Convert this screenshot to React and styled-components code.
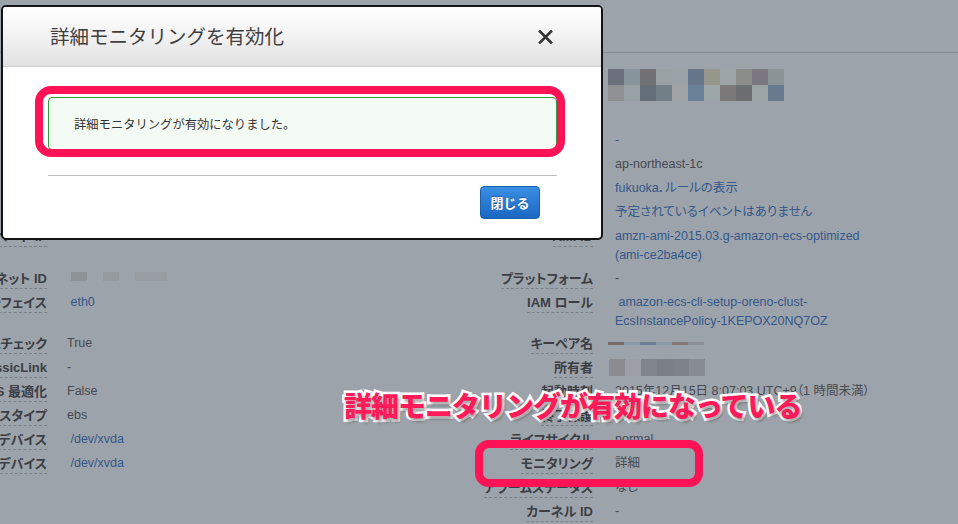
import React from "react";
import styled, { createGlobalStyle } from "styled-components";

const Global = createGlobalStyle`
  html, body { margin: 0; padding: 0; background: #9da3aa; }
  body { width: 958px; height: 524px; overflow: hidden; }
`;

const Page = styled.div`
  position: relative;
  width: 958px;
  height: 524px;
  overflow: hidden;
  background: #9da3aa;
  font-family: "Liberation Sans", "Noto Sans CJK JP", sans-serif;
`;

const TopBar = styled.div`
  height: 52px;
  border-bottom: 1px solid #878c93;
`;

const DetailGrid = styled.div`
  display: grid;
  grid-template-columns: 200px 316px 190px 1fr;
  column-gap: 20px;
  margin: 12px 0 0 -153px;
`;

const Label = styled.div`
  padding: 2px 0;
  text-align: right;
  font-size: 13px;
  font-weight: 700;
  color: #3b3e45;
  line-height: 20px;
  white-space: nowrap;
  font-feature-settings: "palt";
`;

const LabelText = styled.span`
  display: inline-block;
  line-height: 19px;
  border-bottom: 1px dashed #7c8188;
`;

const Value = styled.div`
  padding: 2px 0 2px ${(p) => (p.$right ? "2px" : "0")};
  font-size: 12.5px;
  line-height: 19px;
  color: #464a51;
  white-space: nowrap;
  font-feature-settings: "palt";
`;

const Link = styled.span`
  color: #34588b;
  line-height: ${(p) => p.$lh || "inherit"};
  display: ${(p) => (p.$lh ? "block" : "inline")};
`;

const PixelGrid = styled.div`
  display: grid;
  grid-template-columns: repeat(${(p) => p.$cols}, ${(p) => p.$w}px);
  grid-auto-rows: ${(p) => p.$h}px;
  margin: ${(p) => p.$m || "0"};
`;

const Pixel = styled.span`
  background: ${(p) => p.$c};
`;

const Dialog = styled.div`
  position: absolute;
  left: 1px;
  top: 5px;
  width: 598px;
  height: 231px;
  border: 2px solid #141414;
  border-radius: 5px;
  background: #fff;
  display: flex;
  flex-direction: column;
  overflow: hidden;
`;

const DialogHeader = styled.div`
  height: 59px;
  flex: none;
  display: flex;
  align-items: center;
  justify-content: space-between;
  padding: 0 48px 0 47px;
  background: linear-gradient(#ffffff 0%, #f3f3f3 45%, #e1e1e1 100%);
  border-bottom: 1px solid #cfcfcf;
`;

const Title = styled.h1`
  margin: 0;
  font-family: "Noto Sans CJK JP", sans-serif;
  font-size: 19.5px;
  font-weight: 400;
  color: #404040;
  line-height: 1;
  padding-bottom: 2px;
`;

const CloseButton = styled.button`
  border: 0;
  background: none;
  padding: 0;
  width: 15px;
  height: 14px;
  display: flex;
  cursor: pointer;
  margin-top: 1px;
`;

const DialogBody = styled.div`
  padding: 30px 44px 0 45px;
  display: flex;
  flex-direction: column;
`;

const Alert = styled.div`
  height: 51px;
  display: flex;
  align-items: center;
  padding-left: 25px;
  border: 1px solid #2f9c41;
  border-radius: 4px;
  background: #f4fbf5;
  font-family: "Noto Sans CJK JP", sans-serif;
  font-size: 12.3px;
  color: #333;
`;

const Footer = styled.div`
  margin-top: 25px;
  border-top: 1px solid #bdbdbd;
  padding: 10px 17px 0 0;
  display: flex;
  justify-content: flex-end;
`;

const PrimaryButton = styled.button`
  width: 60px;
  height: 33px;
  border: 1px solid #1b5fae;
  border-radius: 4px;
  background: linear-gradient(#3a8fe2, #1b67c2);
  color: #fff;
  font-family: "Noto Sans CJK JP", sans-serif;
  font-size: 13px;
  font-weight: 700;
  text-shadow: 0 -1px 0 rgba(0, 0, 0, 0.3);
  padding: 0;
`;

const Highlight = styled.div`
  position: absolute;
  left: ${(p) => p.$x}px;
  top: ${(p) => p.$y}px;
  width: ${(p) => p.$w}px;
  height: ${(p) => p.$h}px;
  box-sizing: border-box;
  border: 8px solid #ff1357;
  border-radius: ${(p) => p.$r}px;
  pointer-events: none;
`;

const Annotation = styled.div`
  position: absolute;
  left: 344px;
  top: 390px;
  font-family: "Noto Sans CJK JP", sans-serif;
  font-size: 28px;
  font-weight: 900;
  line-height: 1.1;
  letter-spacing: -1px;
  color: #ff1a5a;
  white-space: nowrap;
  -webkit-text-stroke: 5px #ffffff;
  paint-order: stroke fill;
  text-shadow: 2px 3px 3px rgba(0, 0, 0, 0.35);
`;

const dnsPixels = [
  "#6c707c", "#87949c", "#717073", "#9aa1a4", "#9ba2a8", "#66768a", "#95978a", "#9ea5a9", "#8a8d8a", "#7b7780", "#8c9396",
  "#8e9092", "#98a2a6", "#646e79", "#727f86", "#9fa3a5", "#6a819a", "#9da6a8", "#7a7878", "#6b6e6f", "#9ca4a6", "#687a8e",
];
const subnetPixels = ["#8e9299", "#9da3aa", "#959aa1", "#9da3aa", "#989da4", "#989da4"];
const keyPixels = ["#7a6a68", "#8a97a5", "#6c7c95", "#8c9aa6", "#837675", "#8c9096", "#9da3aa"];
const ownerPixels = ["#8a8c90", "#9aa0a6", "#80858c", "#7b8087", "#7d8289", "#878c92"];

const Pixels = ({ colors, cols, w, h, m }) => (
  <PixelGrid $cols={cols} $w={w} $h={h} $m={m}>
    {colors.map((c, i) => (
      <Pixel key={i} $c={c} />
    ))}
  </PixelGrid>
);

const L = (t) => <Link>{t}</Link>;

const rows = [
  ["", "", "パブリック DNS", <Pixels colors={dnsPixels} cols={11} w={16} h={16} m="2px 0 2px -7px" />],
  ["", "", "パブリック IP", ""],
  ["VPC ID", L("vpc"), "Elastic IP", L("-")],
  ["", "", "アベイラビリティーゾーン", "ap-northeast-1c"],
  ["", "", "セキュリティグループ", <Link>fukuoka．ルールの表示</Link>],
  ["", "", "予定されているイベント", <Link>予定されているイベントはありません</Link>],
  [
    "プライベート IP",
    "-",
    "AMI ID",
    <Link>
      amzn-ami-2015.03.g-amazon-ecs-optimized
      <br />
      (ami-ce2ba4ce)
    </Link>,
  ],
  ["サブネット ID", <Pixels colors={subnetPixels} cols={6} w={16} h={9} m="3px 0 0 4px" />, "プラットフォーム", "-"],
  [
    "ネットワークインターフェイス",
    <Link>&nbsp;eth0</Link>,
    "IAM ロール",
    <Link $lh="18.5px">
      &nbsp;amazon-ecs-cli-setup-oreno-clust-
      <br />
      EcsInstancePolicy-1KEPOX20NQ7OZ
    </Link>,
  ],
  ["送信元/送信先チェック", "True", "キーペア名", <Pixels colors={keyPixels} cols={7} w={16} h={3} m="8px 0 0 -7px" />],
  ["ClassicLink", "-", "所有者", <Pixels colors={ownerPixels} cols={6} w={16} h={17} m="1px 0 0 -6px" />],
  ["EBS 最適化", "False", "起動時刻", "2015年12月15日  8:07:03 UTC+9（1 時間未満）"],
  ["ルートデバイスタイプ", "ebs", "終了保護", "False"],
  ["ルートデバイス", <Link>&nbsp;/dev/xvda</Link>, "ライフサイクル", "normal"],
  ["ブロックデバイス", <Link>&nbsp;/dev/xvda</Link>, "モニタリング", "詳細"],
  ["", "", "アラームステータス", "なし"],
  ["", "", "カーネル ID", "-"],
];

const LabelCell = ({ text }) => <Label>{text ? <LabelText>{text}</LabelText> : null}</Label>;

export default function App() {
  return (
    <>
      <Global />
      <Page>
        <TopBar />
        <DetailGrid>
          {rows.map(([l1, v1, l2, v2], i) => (
            <React.Fragment key={i}>
              <LabelCell text={l1} />
              <Value>{v1}</Value>
              <LabelCell text={l2} />
              <Value $right>{v2}</Value>
            </React.Fragment>
          ))}
        </DetailGrid>

        <Dialog>
          <DialogHeader>
            <Title>詳細モニタリングを有効化</Title>
            <CloseButton aria-label="close">
              <svg width="15" height="14" viewBox="0 0 15 14">
                <path d="M2 1.5 L13 12.5 M13 1.5 L2 12.5" stroke="#333" strokeWidth="2.6" strokeLinecap="square" />
              </svg>
            </CloseButton>
          </DialogHeader>
          <DialogBody>
            <Alert>詳細モニタリングが有効になりました。</Alert>
            <Footer>
              <PrimaryButton>閉じる</PrimaryButton>
            </Footer>
          </DialogBody>
        </Dialog>

        <Highlight $x={35} $y={86} $w={530} $h={71} $r={16} />
        <Highlight $x={475} $y={440} $w={228} $h={47} $r={14} />
        <Annotation>詳細モニタリングが有効になっている</Annotation>
      </Page>
    </>
  );
}
